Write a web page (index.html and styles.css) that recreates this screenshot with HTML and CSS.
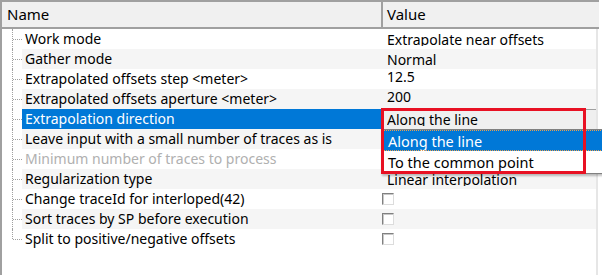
FILE: index.html
```html
<!DOCTYPE html>
<html lang="en">
<head>
    <meta charset="UTF-8">
    <title>Extrapolation properties</title>
    <link rel="stylesheet" href="styles.css">
</head>
<body>
    <div class="grid">
        <div class="header">
            <div class="head-name">Name</div>
            <div class="head-value">Value</div>
            <div class="head-end"></div>
        </div>

        <div class="rows">
            <div class="row">
                <span class="twig"></span>
                <div class="name">Work mode</div>
                <div class="value combo-text"><span>Extrapolate near offsets</span></div>
            </div>
            <div class="row alt">
                <span class="twig"></span>
                <div class="name">Gather mode</div>
                <div class="value combo-text"><span>Normal</span></div>
            </div>
            <div class="row">
                <span class="twig"></span>
                <div class="name">Extrapolated offsets step &lt;meter&gt;</div>
                <div class="value edit-text">12.5</div>
            </div>
            <div class="row alt">
                <span class="twig"></span>
                <div class="name">Extrapolated offsets aperture &lt;meter&gt;</div>
                <div class="value edit-text">200</div>
            </div>
            <div class="row selected">
                <span class="twig"></span>
                <div class="name">Extrapolation direction</div>
                <div class="value combo-box"><span>Along the line</span></div>
            </div>
            <div class="row alt">
                <span class="twig"></span>
                <div class="name">Leave input with a small number of traces as is</div>
                <div class="value"></div>
            </div>
            <div class="row disabled">
                <span class="twig"></span>
                <div class="name">Minimum number of traces to process</div>
                <div class="value"></div>
            </div>
            <div class="row alt">
                <span class="twig"></span>
                <div class="name">Regularization type</div>
                <div class="value combo-text"><span>Linear interpolation</span></div>
            </div>
            <div class="row">
                <span class="twig"></span>
                <div class="name">Change traceId for interloped(42)</div>
                <div class="value"><span class="check"></span></div>
            </div>
            <div class="row alt">
                <span class="twig"></span>
                <div class="name">Sort traces by SP before execution</div>
                <div class="value"><span class="check"></span></div>
            </div>
            <div class="row last">
                <span class="twig"></span>
                <div class="name">Split to positive/negative offsets</div>
                <div class="value"><span class="check"></span></div>
            </div>
        </div>

        <!-- open list of the direction combo -->
        <div class="dropdown">
            <div class="option active"><span>Along the line</span></div>
            <div class="option">To the common point</div>
        </div>

        <!-- red highlight drawn over the screenshot -->
        <div class="marker"></div>
    </div>
</body>
</html>
```

FILE: styles.css
```css
* {
    margin: 0;
    padding: 0;
    box-sizing: border-box;
}

body {
    width: 602px;
    height: 275px;
    overflow: hidden;
    background: #fff;
    font-family: 'Noto Sans', 'Open Sans', sans-serif;
    font-size: 14px;
    color: #000;
}

.grid {
    position: relative;
    width: 602px;
    height: 275px;
    border-left: 2px solid #a0a0a0;
}

.header {
    display: flex;
    height: 29px;
    background: #f0f0f0;
    border-top: 2px solid #a0a0a0;
    border-bottom: 2px solid #a0a0a0;
    width: 597px;
}

.head-name {
    width: 379px;
    padding: 2px 0 0 5px;
    font-size: 15px;
    line-height: 20px;
}

.head-value {
    flex: 1;
    border-left: 2px solid #a0a0a0;
    padding: 2px 0 0 4px;
    font-size: 15px;
    line-height: 20px;
}

.rows {
    width: 596px;
    border-right: 2px solid #e6e6e6;
    height: 246px;
}

.row {
    display: flex;
    height: 20px;
    line-height: 20px;
}

.twig {
    position: relative;
    width: 20px;
    flex: none;
}

.twig::before {
    content: '';
    position: absolute;
    left: 10px;
    top: 0;
    bottom: 0;
    border-left: 1px dotted #a0a0a0;
}

.twig::after {
    content: '';
    position: absolute;
    left: 11px;
    width: 9px;
    top: 10px;
    border-top: 1px dotted #a0a0a0;
}

.last .twig::before {
    bottom: 10px;
}

.name {
    width: 359px;
    flex: none;
    padding-left: 3px;
    white-space: nowrap;
    overflow: hidden;
}

.value {
    flex: 1;
    padding-left: 6px;
    white-space: nowrap;
    overflow: hidden;
}

.alt .name,
.alt .value {
    background: #f5f5f5;
}

.selected .name {
    background: #0078d7;
    color: #fff;
}

.disabled .name {
    color: #b0b0b0;
}

.combo-text span {
    display: block;
    height: 17px;
    overflow: hidden;
    line-height: 22px;
}

.edit-text {
    line-height: 16px;
}

.combo-box {
    background: #efefef;
    border-top: 1px solid #a0a0a0;
}

.combo-box span {
    display: block;
    height: 16px;
    overflow: hidden;
    line-height: 20px;
}

.check {
    display: inline-block;
    width: 12px;
    height: 12px;
    margin: 4px 0 0 -5px;
    vertical-align: top;
    background: #fff;
    border: 1px solid;
    border-color: #808080 #dcdcdc #dcdcdc #808080;
    box-shadow: inset 1px 1px 0 #c8c8c8;
}

.dropdown {
    position: absolute;
    left: 380px;
    top: 129px;
    width: 240px;
    height: 45px;
    background: #fff;
    border: 1px solid #808080;
    box-shadow: 0 2px 2px rgba(0, 0, 0, 0.25);
}

.option {
    height: 21px;
    line-height: 22px;
    padding-left: 5px;
    white-space: nowrap;
    font-size: 14.5px;
}

.option.active {
    background: #0078d7;
    color: #fff;
    outline: 1px dotted #e8a050;
    outline-offset: -1px;
}

.marker {
    position: absolute;
    left: 379px;
    top: 108px;
    width: 205px;
    height: 66px;
    border: 3px solid #e81123;
}
```
